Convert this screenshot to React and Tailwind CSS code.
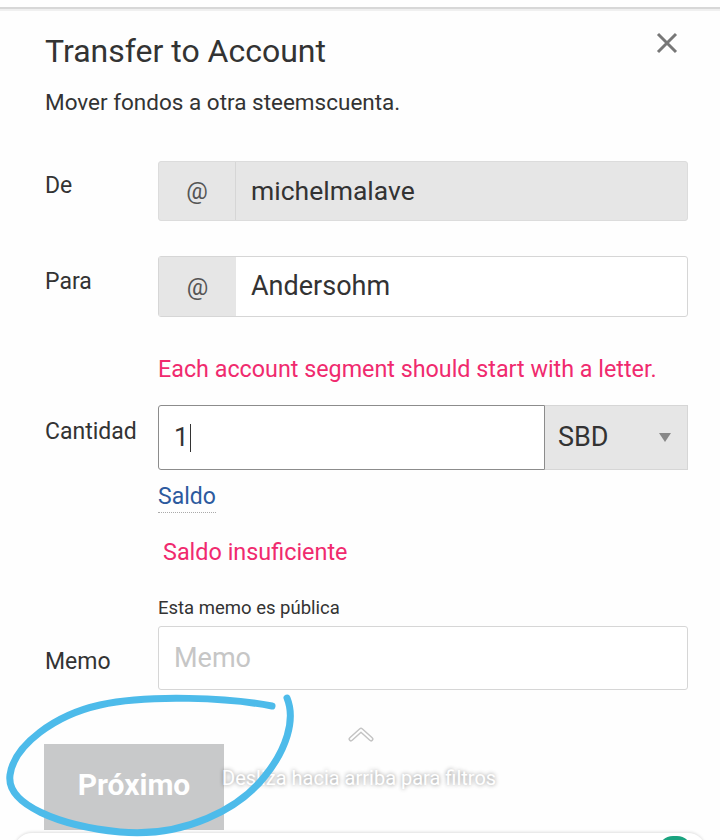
import React from "react";

function Row({ label, labelClass = "", children, className = "" }) {
  return (
    <div className={`flex ${className}`}>
      <div className={`w-[113px] shrink-0 text-[23px] leading-[28px] text-[#333] ${labelClass}`}>
        {label}
      </div>
      <div className="flex-1">{children}</div>
    </div>
  );
}

export default function App() {
  return (
    <div className="relative w-[720px] h-[840px] overflow-hidden bg-[#fefefe] font-['Roboto',sans-serif] text-[#333]">
      {/* top divider */}
      <div className="h-[7px] bg-white" />
      <div className="h-[2px] bg-[#d8d8d8]" />
      <div className="h-[2px] bg-[#f0f0f0]" />

      <div className="pl-[45px] pr-[32px]">
        <div className="mt-[22px] flex items-start justify-between h-[34px]">
          <h1 className="text-[32px] leading-[36px] text-[#333]">Transfer to Account</h1>
          <button className="mr-[10px] mt-[-1px] text-[#777]">
            <svg width="22" height="22" viewBox="0 0 22 22">
              <path d="M2 2 L20 20 M20 2 L2 20" stroke="#777" strokeWidth="3" />
            </svg>
          </button>
        </div>
        <p className="mt-[23px] text-[22.5px] leading-[24px]">Mover fondos a otra steemscuenta.</p>

        <Row label="De" labelClass="pt-[11px]" className="mt-[47px]">
          <div className="flex h-[60px] rounded-[3px] border border-[#dcdcdc] bg-[#e6e6e6]">
            <div className="w-[77px] flex items-center justify-center border-r border-[#d6d6d6] text-[24px] text-[#555]">@</div>
            <div className="flex items-center pl-[15px] text-[26.5px] text-[#333]">michelmalave</div>
          </div>
        </Row>

        <Row label="Para" labelClass="pt-[12px]" className="mt-[35px]">
          <div className="flex h-[61px] rounded-[3px] border border-[#d6d6d6] bg-white">
            <div className="w-[77px] flex items-center justify-center bg-[#e6e6e6] text-[24px] text-[#555]">@</div>
            <div className="flex items-center pl-[15px] text-[27px] text-[#333]">Andersohm</div>
          </div>
        </Row>

        <Row label="" className="mt-[40px]">
          <p className="text-[23.3px] leading-[24px] text-[#f02a6e]">Each account segment should start with a letter.</p>
        </Row>

        <Row label="Cantidad" labelClass="pt-[13px]" className="mt-[24px]">
          <div className="flex h-[65px]">
            <div className="w-[387px] flex items-center rounded-l-[3px] border border-[#8c8c8c] bg-white pl-[15px] text-[26px]">
              1<span className="ml-[1px] h-[28px] border-l border-[#333]" />
            </div>
            <div className="flex-1 flex items-center justify-between border border-l-0 border-[#d6d6d6] bg-[#e6e6e6] pl-[13px] pr-[16px] text-[27px] text-[#333]">
              SBD
              <svg width="12" height="10" viewBox="0 0 12 10">
                <path d="M0 0 L12 0 L6 9 Z" fill="#888" />
              </svg>
            </div>
          </div>
        </Row>

        <Row label="" className="mt-[14px]">
          <span className="inline-block border-b border-dotted border-[#aaa] pb-[2px] text-[23px] leading-[26px] text-[#2c5a9e]">Saldo</span>
        </Row>

        <Row label="" className="mt-[27px]">
          <p className="pl-[5px] text-[23.4px] leading-[24px] text-[#f02a6e]">Saldo insuficiente</p>
        </Row>

        <Row label="" className="mt-[35px]">
          <p className="text-[18.5px] leading-[18px] text-[#333]">Esta memo es pública</p>
        </Row>

        <Row label="Memo" labelClass="pt-[22px]" className="mt-[9px]">
          <div className="flex h-[64px] items-center rounded-[3px] border border-[#d6d6d6] bg-white pl-[15px] text-[27px] text-[#c6c6c6]">
            Memo
          </div>
        </Row>

        <button className="mt-[54px] ml-[-1px] flex h-[86px] w-[180px] items-center justify-center bg-[#c8c9ca] pb-[6px] text-[30px] font-bold text-white">
          Próximo
        </button>
      </div>

      {/* swipe hint overlay */}
      <svg className="absolute left-[348px] top-[726px]" width="26" height="16" viewBox="0 0 26 16">
        <path d="M3 13 L13 4 L23 13" fill="none" stroke="#c4c4c4" strokeWidth="5" strokeLinejoin="round" strokeLinecap="round" />
        <path d="M3 13 L13 4 L23 13" fill="none" stroke="#fff" strokeWidth="2" strokeLinejoin="round" strokeLinecap="round" />
      </svg>
      <div className="absolute left-[222px] top-[766px] text-[20px] leading-[24px] text-white [text-shadow:0_0_4px_rgba(0,0,0,0.45)]">
        Desliza hacia arriba para filtros
      </div>

      {/* bottom sheet edge */}
      <div className="absolute left-[14px] right-[14px] top-[833px] h-[20px] rounded-t-[18px] bg-white shadow-[0_-1px_3px_rgba(0,0,0,0.12)]" />
      <div className="absolute left-[658px] top-[836px] h-[30px] w-[34px] rounded-full bg-[#1aa37f]" />

      {/* hand-drawn annotation */}
      <svg className="absolute left-0 top-0 pointer-events-none" width="720" height="840" viewBox="0 0 720 840">
        <path
          d="M272 706 C 230 698, 150 694, 100 705 C 55 715, 14 745, 10 775 C 6 805, 60 826, 120 832 C 185 838, 240 808, 265 776 C 286 750, 296 720, 287 698"
          fill="none"
          stroke="#4dbbea"
          strokeWidth="7"
          strokeLinecap="round"
        />
      </svg>
    </div>
  );
}
